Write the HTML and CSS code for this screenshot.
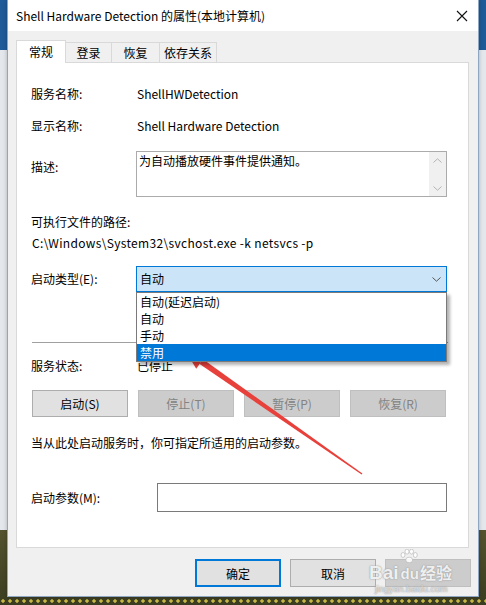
FILE: index.html
```html
<!DOCTYPE html>
<html lang="zh-CN">

<head>
    <meta charset="UTF-8">
    <meta name="viewport" content="width=device-width, initial-scale=1.0">
    <title>Shell Hardware Detection 的属性(本地计算机)</title>
    <link rel="stylesheet" href="styles.css">
</head>

<body>
    <div id="dialog">
        <div id="titlebar">
            <span class="title">Shell Hardware Detection 的属性(本地计算机)</span>
            <svg class="close" width="12" height="12" viewBox="0 0 12 12">
                <path d="M1 1 L11 11 M11 1 L1 11" stroke="#111" stroke-width="1.1" fill="none" />
            </svg>
        </div>
        <div id="content">
            <div id="tabs">
                <div class="tab active">常规</div>
                <div class="tab">登录</div>
                <div class="tab wide">恢复</div>
                <div class="tab">依存关系</div>
            </div>
            <div id="panel">
                <div class="row first">
                    <span class="label">服务名称:</span>
                    <span class="value">ShellHWDetection</span>
                </div>
                <div class="row second">
                    <span class="label">显示名称:</span>
                    <span class="value">Shell Hardware Detection</span>
                </div>
                <div class="row desc">
                    <span class="label">描述:</span>
                    <div class="textbox">
                        <span>为自动播放硬件事件提供通知。</span>
                        <div class="scroll">
                            <svg width="9" height="5" viewBox="0 0 9 5"><path d="M0.5 4.5 L4.5 0.8 L8.5 4.5" stroke="#b4b4b4" fill="none" /></svg>
                            <svg width="9" height="5" viewBox="0 0 9 5"><path d="M0.5 0.5 L4.5 4.2 L8.5 0.5" stroke="#b4b4b4" fill="none" /></svg>
                        </div>
                    </div>
                </div>
                <div class="path-label">可执行文件的路径:</div>
                <div class="path">C:\Windows\System32\svchost.exe -k netsvcs -p</div>
                <div class="row startup">
                    <span class="label">启动类型(E):</span>
                    <div class="combo">
                        <span>自动</span>
                        <svg width="9" height="5" viewBox="0 0 9 5"><path d="M0.5 0.5 L4.5 4.2 L8.5 0.5" stroke="#555" fill="none" /></svg>
                        <ul class="options">
                            <li>自动(延迟启动)</li>
                            <li>自动</li>
                            <li>手动</li>
                            <li class="selected">禁用</li>
                        </ul>
                    </div>
                </div>
                <div class="separator"></div>
                <div class="row status">
                    <span class="label">服务状态:</span>
                    <span class="value">已停止</span>
                </div>
                <div class="service-buttons">
                    <button class="btn">启动(S)</button>
                    <button class="btn disabled">停止(T)</button>
                    <button class="btn disabled">暂停(P)</button>
                    <button class="btn disabled">恢复(R)</button>
                </div>
                <div class="hint">当从此处启动服务时，你可指定所适用的启动参数。</div>
                <div class="param">
                    <span class="label">启动参数(M):</span>
                    <div class="input"></div>
                </div>
            </div>
            <div id="footer">
                <button class="btn default">确定</button>
                <button class="btn">取消</button>
                <button class="btn disabled"></button>
            </div>
        </div>
    </div>

    <div class="watermark">
        <svg class="paw" width="18" height="14" viewBox="0 0 18 14">
            <g fill="rgba(255,255,255,0.85)" stroke="#b0b0b0" stroke-width="0.6">
                <ellipse cx="3" cy="6" rx="2" ry="2.5" />
                <ellipse cx="7" cy="2.6" rx="2" ry="2.5" />
                <ellipse cx="11.5" cy="2.6" rx="2" ry="2.5" />
                <ellipse cx="15.3" cy="6" rx="2" ry="2.5" />
                <ellipse cx="9.2" cy="11" rx="3.5" ry="2.8" />
            </g>
        </svg>
        <span>Bai</span><span class="du">du</span><span class="jy">经验</span>
        <small>jingyan.baidu.com</small>
    </div>

    <svg class="arrow" width="486" height="605" viewBox="0 0 486 605">
        <polygon points="361.6,474.5 199.6,364.1 203.0,359.3 362.4,473.5" fill="#e8403b" />
        <polygon points="185,350 196.2,368.8 206.4,354.4" fill="#e8403b" />
    </svg>
</body>

</html>
```

FILE: styles.css
```css
body {
    margin: 0;
    width: 486px;
    height: 605px;
    overflow: hidden;
    position: relative;
    font-family: "Noto Sans CJK SC", "Noto Sans", sans-serif;
    font-size: 12px;
    color: #000;
    background:
        radial-gradient(circle at 3px 3px, #c9b845 1.4px, transparent 2px) 0 598px / 7px 5px repeat-x,
        linear-gradient(to bottom, #1f5b98 0, #1f5b98 50px, #e4e7eb 50px, #e4e7eb 530px, #55532d 530px, #3b3d22 605px);
}

#dialog {
    margin-left: 7px;
    width: 472px;
    height: 597px;
    box-sizing: border-box;
    border: 1px solid #8ea6c2;
    border-top: none;
    background-color: #f0f0f0;
    display: flex;
    flex-direction: column;
    box-shadow: 0 0 4px rgba(0, 0, 0, 0.25);
}

#titlebar {
    height: 31px;
    flex: none;
    background-color: #fff;
    display: flex;
    align-items: center;
    justify-content: space-between;
    padding: 0 10px 0 8px;
}

#content {
    flex: 1;
    padding: 9px 8px 0 8px;
}

#tabs {
    height: 22px;
    display: flex;
    align-items: flex-end;
    position: relative;
    z-index: 1;
}

.tab {
    height: 20px;
    min-width: 46px;
    box-sizing: border-box;
    padding: 0 4px;
    border: 1px solid #d9d9d9;
    border-bottom: none;
    margin-left: -1px;
    text-align: center;
    line-height: 19px;
    background-color: #f0f0f0;
}

.tab.wide {
    min-width: 49px;
}

.tab.active {
    height: 23px;
    min-width: 50px;
    margin-left: 0;
    margin-bottom: -1px;
    background-color: #fff;
    line-height: 22px;
}

.tab.active + .tab {
    margin-left: 0;
    border-left: none;
}

#panel {
    position: relative;
    width: 453px;
    height: 486px;
    box-sizing: border-box;
    border: 1px solid #d9d9d9;
    background-color: #fff;
    padding: 21px 21px 0 14px;
}

.row {
    display: grid;
    grid-template-columns: 105px 1fr;
    align-items: center;
    line-height: 20px;
}

.value {
    padding-left: 1px;
}

.second {
    margin-top: 12px;
}

.desc {
    margin-top: 15px;
    align-items: start;
}

.desc .label {
    padding-top: 6px;
}

.textbox {
    height: 46px;
    box-sizing: border-box;
    border: 1px solid #ababab;
    display: flex;
    justify-content: space-between;
    padding-left: 2px;
}

.textbox span {
    line-height: 18px;
}

.scroll {
    width: 17px;
    background-color: #f0f0f0;
    display: flex;
    flex-direction: column;
    justify-content: space-between;
    align-items: center;
    padding: 6px 0 5px;
}

.path-label {
    margin-top: 15px;
    line-height: 20px;
}

.path {
    margin-top: 1px;
    line-height: 20px;
    padding-left: 1px;
    letter-spacing: 0.33px;
}

.startup {
    margin-top: 13px;
}

.combo {
    position: relative;
    height: 26px;
    box-sizing: border-box;
    border: 1px solid #0078d7;
    background-color: #cce4f7;
    display: flex;
    align-items: center;
    justify-content: space-between;
    padding: 0 5px 0 3px;
}

.options {
    position: absolute;
    top: 25px;
    left: -1px;
    right: -1px;
    margin: 0;
    padding: 0;
    list-style: none;
    background-color: #fff;
    border: 1px solid #7a7a7a;
    box-shadow: 3px 3px 3px rgba(0, 0, 0, 0.3);
    z-index: 2;
}

.options li {
    height: 17px;
    line-height: 17px;
    padding-left: 3px;
}

.options li.selected {
    background-color: #0078d7;
    color: #fff;
}

.separator {
    margin-top: 50px;
    height: 1px;
    width: 416px;
    margin-left: 1px;
    background-color: #a0a0a0;
}

.status {
    margin-top: 13px;
}

.service-buttons {
    margin-top: 14px;
    margin-left: 1px;
    display: flex;
    gap: 10px;
}

.btn {
    font-family: inherit;
    font-size: 12px;
    color: #000;
    height: 27px;
    width: 96px;
    padding: 0;
    border: 1px solid #adadad;
    background-color: #e1e1e1;
}

.btn.disabled {
    border-color: #bfbfbf;
    background-color: #cccccc;
    color: #838383;
}

.hint {
    margin-top: 16px;
    line-height: 20px;
}

.param {
    margin-top: 30px;
    display: flex;
    align-items: center;
}

.param .label {
    width: 126px;
}

.input {
    flex: 1;
    height: 29px;
    box-sizing: border-box;
    border: 1px solid #7a7a7a;
}

#footer {
    margin-top: 11px;
    margin-right: -1px;
    display: flex;
    justify-content: flex-end;
    gap: 9px;
}

#footer .btn {
    width: 86px;
    height: 28px;
}

#footer .btn.default {
    border: 2px solid #0078d7;
}

.watermark {
    position: absolute;
    left: 369px;
    top: 562px;
    width: 100px;
    color: rgba(255, 255, 255, 0.85);
    font-family: "Liberation Sans", sans-serif;
    font-size: 19px;
    font-weight: bold;
    text-shadow: 0 0 1px #999, 0 0 2px #aaa;
    line-height: 20px;
    white-space: nowrap;
}

.watermark .paw {
    position: absolute;
    left: 31px;
    top: -13px;
}

.watermark .du {
    font-size: 15px;
    margin-left: 2px;
}

.watermark .jy {
    font-family: "Noto Sans CJK SC", sans-serif;
    font-size: 16px;
    margin-left: 1px;
}

.watermark small {
    display: block;
    font-size: 9px;
    font-weight: normal;
    line-height: 10px;
    margin-left: 6px;
    color: rgba(255, 255, 255, 0.6);
}

.arrow {
    position: absolute;
    left: 0;
    top: 0;
    pointer-events: none;
}
```
